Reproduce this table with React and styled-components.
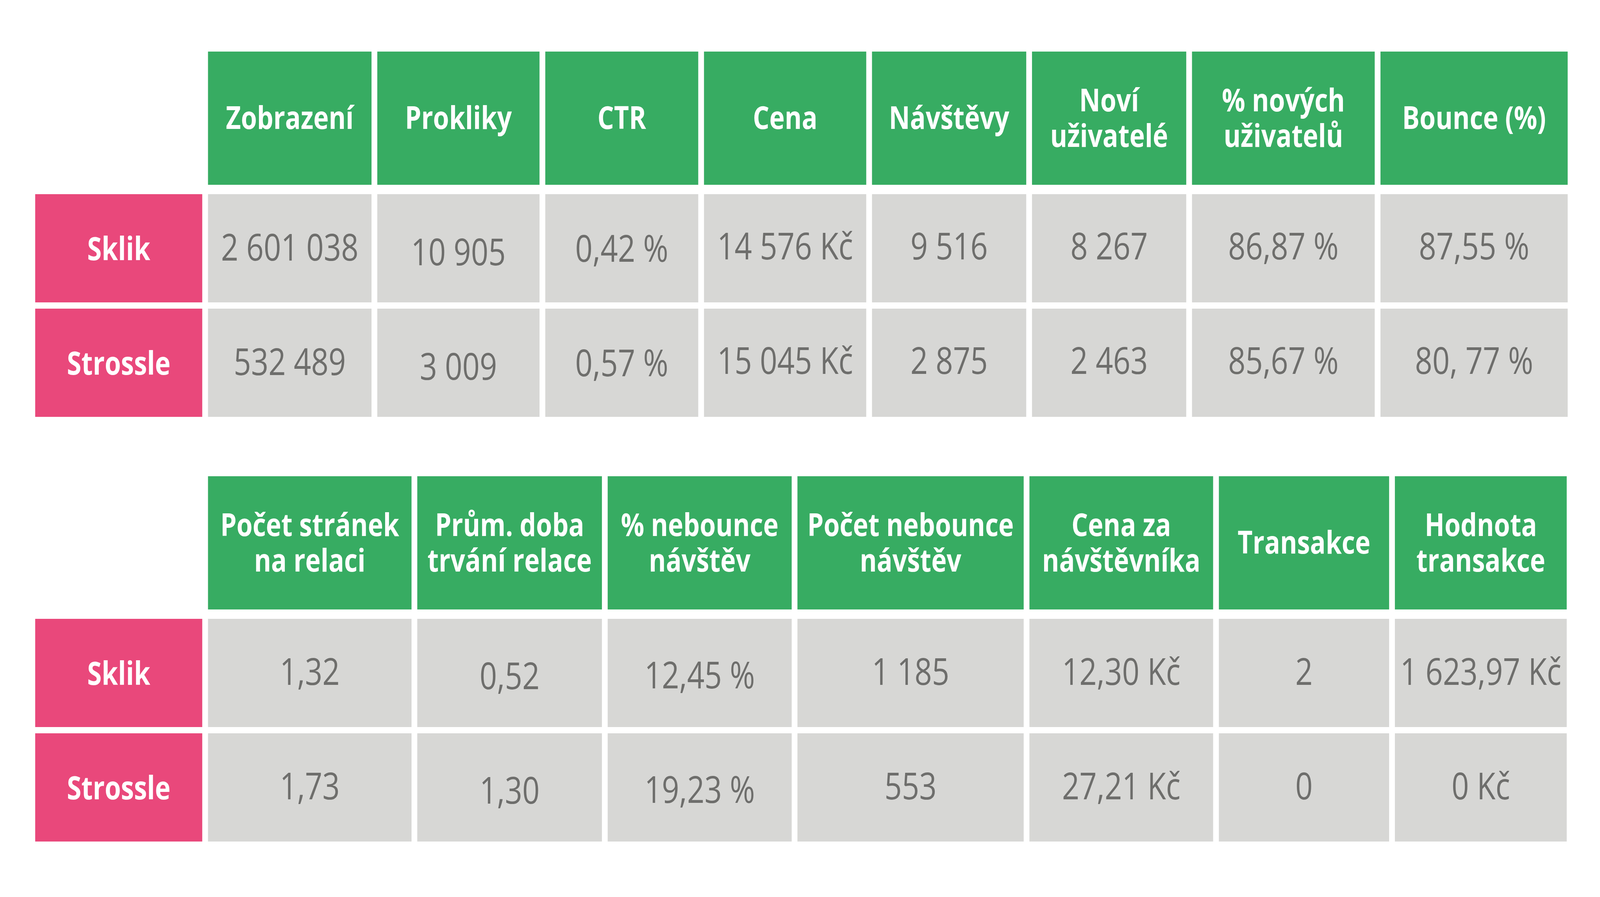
import React from "react";
import styled, { createGlobalStyle } from "styled-components";

const DESIGN_WIDTH = 5000;

const GlobalStyle = createGlobalStyle`
  html, body {
    margin: 0;
    padding: 0;
    background: #ffffff;
    overflow: hidden;
  }
  body {
    font-family: "Open Sans", "Noto Sans", "Liberation Sans", sans-serif;
  }
`;

const Viewport = styled.div`
  width: 100vw;
  height: 2296px;
  overflow: hidden;
  background: #ffffff;
`;

const Page = styled.main`
  width: ${DESIGN_WIDTH}px;
  height: 2296px;
  box-sizing: border-box;
  padding: 132px 0 0 110px;
  display: flex;
  flex-direction: column;
  gap: 152px;
  background: #ffffff;
  transform-origin: 0 0;
`;

const Table = styled.section`
  display: grid;
  grid-template-columns: ${(p) => p.$cols};
  grid-template-rows: 349px 277px 277px;
  column-gap: 18px;
  row-gap: 16px;
`;

const Corner = styled.div``;

const HeadCell = styled.div`
  height: 341px;
  align-self: start;
  background: #37ac62;
  color: #ffffff;
  display: flex;
  align-items: center;
  justify-content: center;
  text-align: center;
  font-family: "Open Sans", "Noto Sans", sans-serif;
  font-weight: 700;
  font-size: 81px;
  line-height: 91px;
  padding-bottom: 8px;
  box-sizing: border-box;
`;

const Label = styled.div`
  background: #e9487b;
  color: #ffffff;
  display: flex;
  align-items: center;
  justify-content: center;
  font-family: "Open Sans", "Noto Sans", sans-serif;
  font-weight: 700;
  font-size: 82px;
  line-height: 1;
  padding-bottom: 4px;
  box-sizing: border-box;
`;

const Value = styled.div`
  background: #d7d7d5;
  color: #6e6e6c;
  display: flex;
  align-items: center;
  justify-content: center;
  font-family: "Open Sans", "Noto Sans", sans-serif;
  font-weight: 400;
  font-size: 95px;
  line-height: 1;
  white-space: nowrap;
`;

const ValueText = styled.span`
  display: block;
  transform: translateY(${(p) => p.$drop - 8}px);
`;

const topTable = {
  cols: "522px 511px 507px 478px 507px 482px 482px 571px 585px",
  heads: [
    ["Zobrazení"],
    ["Prokliky"],
    ["CTR"],
    ["Cena"],
    ["Návštěvy"],
    ["Noví", "uživatelé"],
    ["% nových", "uživatelů"],
    ["Bounce (%)"],
  ],
  drops: [3, 15, 6, 0, 0, 0, 0, 0],
  rows: [
    {
      label: "Sklik",
      values: ["2 601 038", "10 905", "0,42 %", "14 576 Kč", "9 516", "8 267", "86,87 %", "87,55 %"],
    },
    {
      label: "Strossle",
      values: ["532 489", "3 009", "0,57 %", "15 045 Kč", "2 875", "2 463", "85,67 %", "80, 77 %"],
    },
  ],
};

const bottomTable = {
  cols: "522px 636px 577px 575px 707px 574px 532px 537px",
  heads: [
    ["Počet stránek", "na relaci"],
    ["Prům. doba", "trvání relace"],
    ["% nebounce", "návštěv"],
    ["Počet nebounce", "návštěv"],
    ["Cena za", "návštěvníka"],
    ["Transakce"],
    ["Hodnota", "transakce"],
  ],
  drops: [2, 13, 11, 2, 2, 2, 2],
  rows: [
    {
      label: "Sklik",
      values: ["1,32", "0,52", "12,45 %", "1 185", "12,30 Kč", "2", "1 623,97 Kč"],
    },
    {
      label: "Strossle",
      values: ["1,73", "1,30", "19,23 %", "553", "27,21 Kč", "0", "0 Kč"],
    },
  ],
};

function DataTable({ data }) {
  return (
    <Table $cols={data.cols}>
      <Corner />
      {data.heads.map((lines, i) => (
        <HeadCell key={`h${i}`}>
          <span>
            {lines.map((l, j) => (
              <React.Fragment key={j}>
                {j > 0 && <br />}
                {l}
              </React.Fragment>
            ))}
          </span>
        </HeadCell>
      ))}
      {data.rows.map((row) => (
        <React.Fragment key={row.label}>
          <Label>{row.label}</Label>
          {row.values.map((v, i) => (
            <Value key={`${row.label}${i}`}>
              <ValueText $drop={data.drops[i]}>{v}</ValueText>
            </Value>
          ))}
        </React.Fragment>
      ))}
    </Table>
  );
}

export default function App() {
  const fit =
    typeof window !== "undefined"
      ? Math.min(1, window.innerWidth / DESIGN_WIDTH)
      : 1;
  return (
    <>
      <GlobalStyle />
      <Viewport>
        <Page style={{ transform: `scaleX(${fit})` }}>
          <DataTable data={topTable} />
          <DataTable data={bottomTable} />
        </Page>
      </Viewport>
    </>
  );
}
